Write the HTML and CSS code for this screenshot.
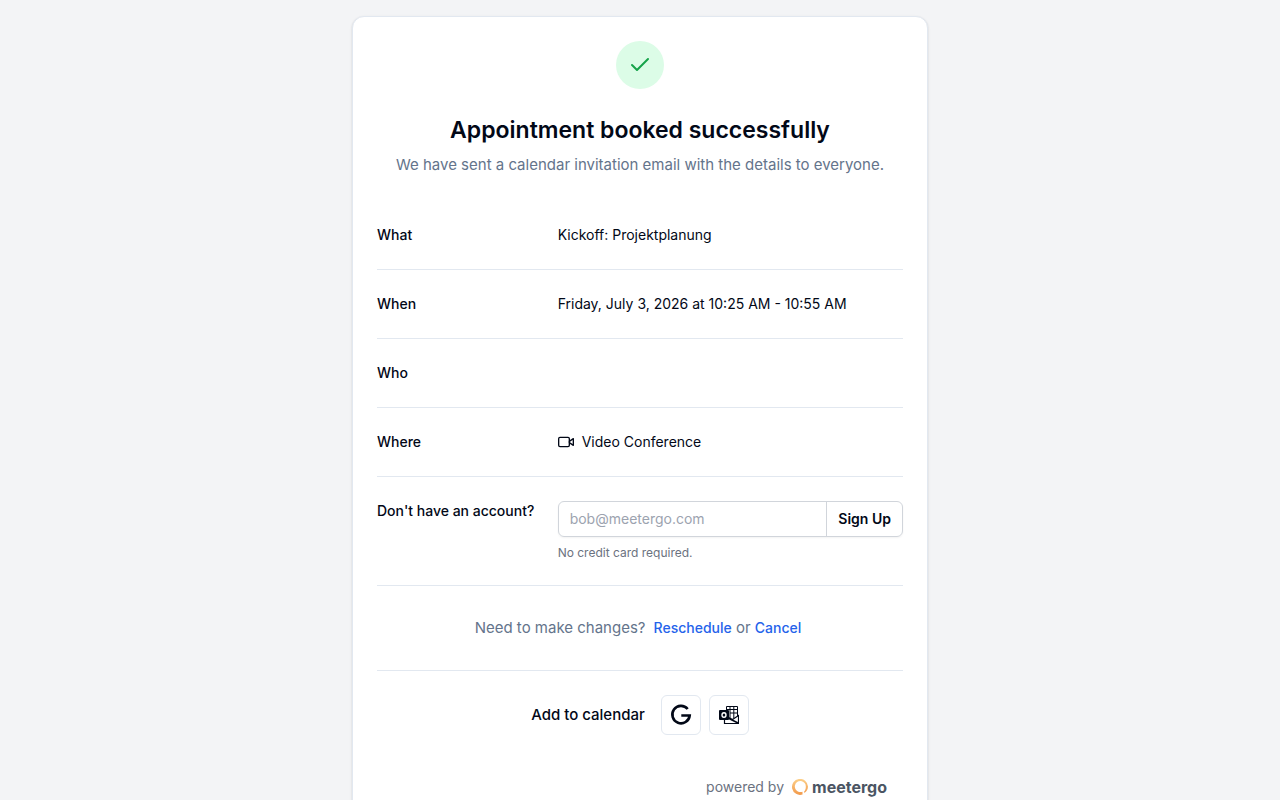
FILE: index.html
```html
<!DOCTYPE html>
<html lang="en">
  <head>
    <meta charset="utf-8">
    <meta name="viewport" content="width=device-width, initial-scale=1">
    <title>Appointment booked successfully</title>
    <link rel="stylesheet" href="styles.css">
  </head>
  <body>
    <main class="card">
      <header class="header">
        <div class="check">
          <svg width="24" height="24" viewBox="0 0 24 24" fill="none" stroke="currentColor" stroke-width="2" stroke-linecap="round" stroke-linejoin="round" aria-hidden="true">
            <path d="M20 6 9 17l-5-5"/>
          </svg>
        </div>
        <h1 class="title">Appointment booked successfully</h1>
        <p class="subtitle">We have sent a calendar invitation email with the details to everyone.</p>
      </header>

      <dl class="details">
        <div class="row">
          <dt>What</dt>
          <dd>Kickoff: Projektplanung</dd>
        </div>
        <div class="row">
          <dt>When</dt>
          <dd>Friday, July 3, 2026 at 10:25 AM - 10:55 AM</dd>
        </div>
        <div class="row">
          <dt>Who</dt>
          <dd></dd>
        </div>
        <div class="row">
          <dt>Where</dt>
          <dd class="place">
            <svg width="16" height="16" viewBox="0 0 24 24" fill="none" stroke="currentColor" stroke-width="2" stroke-linecap="round" stroke-linejoin="round" aria-hidden="true">
              <rect x="1" y="5" width="16" height="14" rx="2"/>
              <path d="m17 11 6-4v10l-6-4"/>
            </svg>
            Video Conference
          </dd>
        </div>
      </dl>

      <form class="row">
        <label class="signup-label" for="email">Don't have an account?</label>
        <div class="signup">
          <div class="signup-box">
            <input class="email" type="email" id="email" placeholder="bob@meetergo.com">
            <button class="signup-button" type="submit">Sign Up</button>
          </div>
          <p class="hint">No credit card required.</p>
        </div>
      </form>

      <div class="changes">
        <span>Need to make changes?</span>
        <span class="change-links"><a href="#">Reschedule</a> or <a href="#">Cancel</a></span>
      </div>

      <div class="calendar">
        <span class="calendar-label">Add to calendar</span>
        <div class="calendar-buttons">
          <button class="icon-button" type="button" aria-label="Google Calendar">
            <svg width="24" height="24" viewBox="0 0 24 24" fill="none" stroke="currentColor" stroke-width="2.6" aria-hidden="true">
              <path d="M18.7 6A8.7 8.7 0 1 0 20.7 12.5H12.3"/>
            </svg>
          </button>
          <button class="icon-button" type="button" aria-label="Outlook Calendar">
            <svg width="20" height="20" viewBox="0 0 20 20" fill="none" stroke="currentColor" aria-hidden="true">
              <path d="M7.500 10V1.500h11V11M7.500 4.500h11M11 8h7.500M11 1.500V13M14.800 1.500V13"/>
              <path d="M5.500 14v4.500h14V10.500l-6 4-4-2" stroke-width="1.200"/>
              <path d="m9 13 10 5" stroke-width="1.600"/>
              <rect x="0" y="5" width="10" height="10" rx="1" fill="currentColor" stroke="none"/>
              <ellipse cx="5" cy="10" rx="2" ry="2.300" stroke="#fff" stroke-width="1.400"/>
            </svg>
          </button>
        </div>
      </div>

      <footer class="footer">
        <span>powered by</span>
        <a class="brand" href="#">
          <svg width="16" height="16" viewBox="0 0 16 16" fill="none" aria-hidden="true">
            <defs>
              <linearGradient id="ring" x1="0" y1="0" x2="0" y2="1">
                <stop offset="0" stop-color="#fcd08a"/>
                <stop offset="1" stop-color="#f2994a"/>
              </linearGradient>
            </defs>
            <path d="M10.500 15.500A8 8 0 1 1 16 7.500c0 3-1.500 5-3.500 6.300l-.7-.8c1.300-1.300 2-3 2-5A5.500 5.500 0 1 0 7 12.900c1.300.4 2.500.2 3.500-.2z" fill="url(#ring)"/>
          </svg>
          meetergo
        </a>
      </footer>
    </main>
  </body>
</html>
```

FILE: styles.css
```css
* {
  box-sizing: border-box;
}
body {
  margin: 0;
  padding: 16px;
  background: #f3f4f6;
  color: #020817;
  font-family: Inter, "Liberation Sans", sans-serif;
  font-size: 14px;
  line-height: 20px;
}
h1, p, dl, dd {
  margin: 0;
}
input, button {
  font: inherit;
  color: inherit;
}
a {
  text-decoration: none;
}
.card {
  max-width: 576px;
  margin: 0 auto;
  padding: 24px;
  background: #fff;
  border: 1px solid #e2e8f0;
  border-radius: 12px;
  box-shadow: 0 1px 3px rgba(0, 0, 0, 0.1), 0 1px 2px rgba(0, 0, 0, 0.06);
}

/* header */
.header {
  text-align: center;
}
.check {
  display: flex;
  align-items: center;
  justify-content: center;
  width: 48px;
  height: 48px;
  margin: 0 auto 24px;
  border-radius: 50%;
  background: #dcfce7;
  color: #16a34a;
}
.title {
  margin-bottom: 6px;
  font-size: 23px;
  line-height: 34px;
  font-weight: 600;
}
.subtitle {
  margin-bottom: 24px;
  color: #64748b;
  font-size: 15px;
  line-height: 24px;
}

/* details */
.row {
  display: grid;
  grid-template-columns: repeat(3, minmax(0, 1fr));
  gap: 16px;
  padding: 24px 0;
  border-bottom: 1px solid #e2e8f0;
}
.row dt,
.signup-label {
  font-weight: 500;
}
.row dd,
.signup {
  grid-column: span 2;
}
.place {
  display: flex;
  align-items: center;
  gap: 8px;
}
.signup-box {
  display: flex;
  height: 36px;
  border: 1px solid #d1d5db;
  border-radius: 6px;
  box-shadow: 0 1px 2px rgba(0, 0, 0, 0.05);
}
.email {
  flex: 1;
  min-width: 0;
  padding: 0 11px;
  border: 0;
  border-radius: 6px;
  background: none;
}
.email::placeholder {
  color: #9ca3af;
}
.signup-button {
  padding: 0 11px;
  border: 0;
  border-left: 1px solid #d1d5db;
  background: none;
  font-weight: 600;
}
.hint {
  margin-top: 8px;
  color: #6b7280;
  font-size: 12px;
  line-height: 16px;
}

/* reschedule or cancel */
.changes {
  display: flex;
  justify-content: center;
  gap: 8px;
  padding: 30px 4px 30px 0;
  border-bottom: 1px solid #e2e8f0;
  color: #64748b;
  font-size: 15px;
  line-height: 24px;
}
.changes a {
  color: #2563eb;
  font-size: 14px;
  line-height: 20px;
  font-weight: 500;
}

/* calendar buttons */
.calendar {
  display: flex;
  align-items: center;
  justify-content: center;
  gap: 16px;
  padding: 24px 0;
}
.calendar-label {
  font-size: 15px;
  font-weight: 500;
}
.calendar-buttons {
  display: flex;
  gap: 8px;
}
.icon-button {
  display: flex;
  align-items: center;
  justify-content: center;
  width: 40px;
  height: 40px;
  padding: 0;
  border: 1px solid #e2e8f0;
  border-radius: 6px;
  background: #fff;
}

/* footer */
.footer {
  display: flex;
  align-items: center;
  justify-content: flex-end;
  gap: 8px;
  padding: 16px 16px 0;
  color: #6b7280;
}
.brand {
  display: flex;
  align-items: center;
  gap: 4px;
  color: #4b5563;
  font-size: 16px;
  line-height: 24px;
  font-weight: 700;
}
```
